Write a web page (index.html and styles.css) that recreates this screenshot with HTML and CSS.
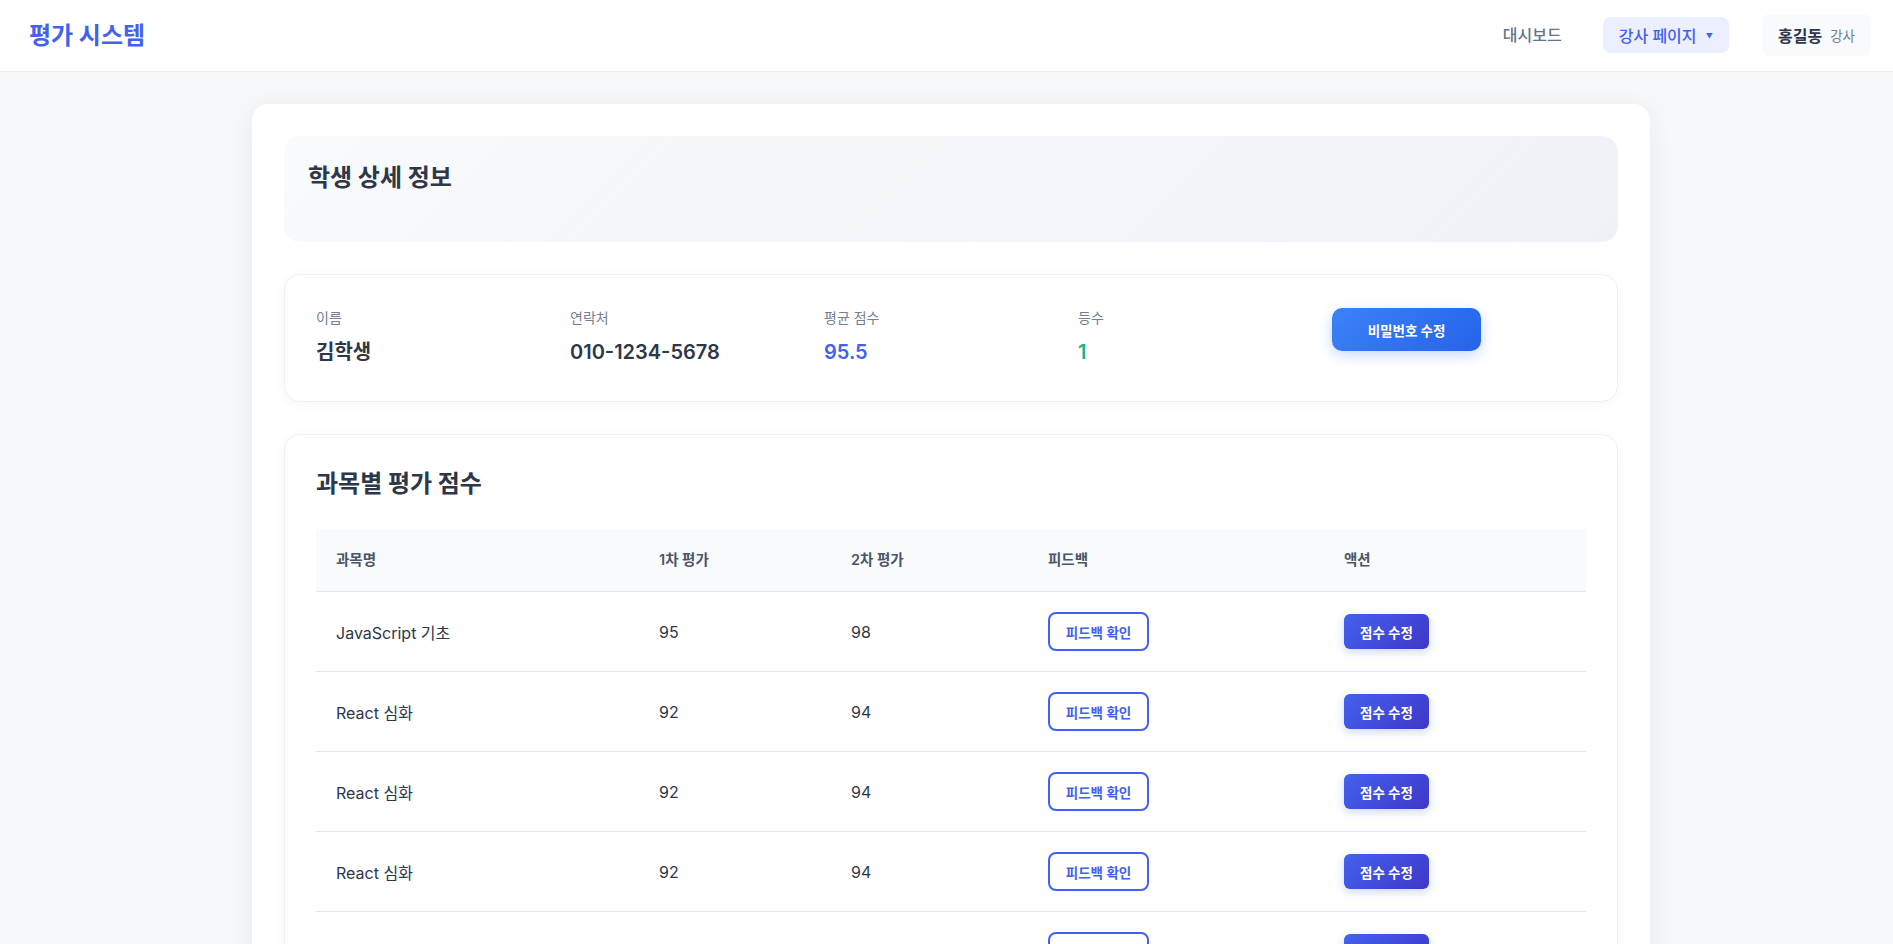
FILE: index.html
```html
<!DOCTYPE html>
<html lang="ko">
<head>
<meta charset="utf-8">
<title>평가 시스템</title>
<link rel="stylesheet" href="styles.css">
</head>
<body>
<header class="topbar">
  <div class="logo">평가 시스템</div>
  <nav class="nav">
    <a class="nav-link">대시보드</a>
    <button class="nav-drop">강사 페이지 <span class="caret">▼</span></button>
    <div class="user-box"><span class="user-name">홍길동</span><span class="user-role">강사</span></div>
  </nav>
</header>

<main class="page">
  <section class="main-card">
    <div class="title-box">
      <h2 class="page-title">학생 상세 정보</h2>
    </div>

    <div class="info-card">
      <div class="info-item">
        <div class="info-label">이름</div>
        <div class="info-value">김학생</div>
      </div>
      <div class="info-item">
        <div class="info-label">연락처</div>
        <div class="info-value">010-1234-5678</div>
      </div>
      <div class="info-item">
        <div class="info-label">평균 점수</div>
        <div class="info-value blue">95.5</div>
      </div>
      <div class="info-item">
        <div class="info-label">등수</div>
        <div class="info-value green">1</div>
      </div>
      <div class="info-item">
        <button class="btn-password">비밀번호 수정</button>
      </div>
    </div>

    <div class="table-card">
      <h3 class="section-title">과목별 평가 점수</h3>
      <table class="score-table">
        <colgroup>
          <col class="c1"><col class="c2"><col class="c3"><col class="c4"><col class="c5">
        </colgroup>
        <thead>
          <tr><th>과목명</th><th>1차 평가</th><th>2차 평가</th><th>피드백</th><th>액션</th></tr>
        </thead>
        <tbody>
          <tr><td>JavaScript 기초</td><td>95</td><td>98</td><td><button class="btn-feedback">피드백 확인</button></td><td><button class="btn-edit">점수 수정</button></td></tr>
          <tr><td>React 심화</td><td>92</td><td>94</td><td><button class="btn-feedback">피드백 확인</button></td><td><button class="btn-edit">점수 수정</button></td></tr>
          <tr><td>React 심화</td><td>92</td><td>94</td><td><button class="btn-feedback">피드백 확인</button></td><td><button class="btn-edit">점수 수정</button></td></tr>
          <tr><td>React 심화</td><td>92</td><td>94</td><td><button class="btn-feedback">피드백 확인</button></td><td><button class="btn-edit">점수 수정</button></td></tr>
          <tr><td>React 심화</td><td>92</td><td>94</td><td><button class="btn-feedback">피드백 확인</button></td><td><button class="btn-edit">점수 수정</button></td></tr>
        </tbody>
      </table>
    </div>
  </section>
</main>
</body>
</html>
```

FILE: styles.css
```css
* { box-sizing: border-box; }

body {
  margin: 0;
  background: #f7f8fa;
  font-family: Inter, "Noto Sans CJK KR", sans-serif;
  color: #2d3748;
}

button { font-family: inherit; cursor: pointer; }

.topbar {
  height: 72px;
  background: #ffffff;
  border-bottom: 1px solid #e9ecf1;
  display: flex;
  align-items: center;
  justify-content: space-between;
  padding: 0 22px 0 29px;
}

.logo {
  font-size: 24px;
  font-weight: 700;
  color: #4361ee;
  margin-top: -4px;
}

.nav {
  display: flex;
  align-items: center;
}

.nav-link {
  font-size: 16px;
  font-weight: 500;
  color: #64748b;
  padding: 8px 16px;
  margin-right: 25px;
  margin-top: -3px;
}

.nav-drop {
  height: 36px;
  padding: 0 16px;
  border: none;
  border-radius: 8px;
  background: #ebefff;
  color: #4361ee;
  font-size: 16px;
  font-weight: 500;
  margin-top: -2px;
}

.caret {
  font-size: 7px;
  margin-left: 5px;
  vertical-align: 3px;
}

.user-box {
  margin-left: 33px;
  height: 42px;
  padding: 0 16px;
  border-radius: 8px;
  background: #f8fafc;
  display: flex;
  align-items: center;
  gap: 8px;
  margin-top: -2px;
}

.user-name {
  font-size: 16px;
  font-weight: 700;
  color: #2d3748;
}

.user-role {
  font-size: 13.5px;
  color: #718096;
}

.page {
  padding: 32px 0 40px 9px;
}

.main-card {
  width: 1398px;
  margin: 0 auto;
  background: #ffffff;
  border-radius: 16px;
  box-shadow: 0 4px 24px rgba(30, 41, 59, 0.07);
  padding: 32px;
}

.title-box {
  background: linear-gradient(135deg, #f8fafc 0%, #eef2f7 100%);
  border-radius: 16px;
  height: 106px;
  padding: 25px 24px;
}

.page-title {
  margin: 0;
  font-size: 24px;
  line-height: 34px;
  font-weight: 700;
  color: #2d3748;
}

.info-card {
  margin-top: 32px;
  background: #ffffff;
  border: 1px solid #edf0f5;
  border-radius: 16px;
  box-shadow: 0 2px 12px rgba(30, 41, 59, 0.04);
  padding: 33px 31px 34px;
  display: grid;
  grid-template-columns: repeat(5, 1fr);
}

.info-label {
  font-size: 14px;
  line-height: 20px;
  color: #718096;
  margin-bottom: 9px;
}

.info-value {
  font-size: 20px;
  line-height: 30px;
  font-weight: 600;
  color: #2d3748;
}

.info-value.blue { color: #4361ee; }
.info-value.green { color: #10b981; }

.btn-password {
  width: 149px;
  height: 43px;
  margin-top: 0;
  border: none;
  border-radius: 10px;
  background: linear-gradient(135deg, #3b82f6 0%, #2563eb 100%);
  color: #ffffff;
  font-size: 13.5px;
  font-weight: 700;
  box-shadow: 0 4px 14px rgba(59, 130, 246, 0.3);
}

.table-card {
  margin-top: 32px;
  background: #ffffff;
  border: 1px solid #edf0f5;
  border-radius: 16px;
  box-shadow: 0 2px 12px rgba(30, 41, 59, 0.04);
  padding: 32px 31px;
}

.section-title {
  margin: 0 0 28px;
  font-size: 24px;
  line-height: 34px;
  font-weight: 700;
  color: #2d3748;
}

.score-table {
  width: 100%;
  border-collapse: collapse;
  table-layout: fixed;
}

.c1 { width: 323px; }
.c2 { width: 192px; }
.c3 { width: 197px; }
.c4 { width: 296px; }
.c5 { width: auto; }

.score-table th {
  background: #f8fafc;
  text-align: left;
  font-size: 14.5px;
  font-weight: 600;
  color: #4a5568;
  padding: 20px 20px;
  line-height: 22px;
  border-bottom: 1px solid #e2e8f0;
}

.score-table td {
  padding: 20px 20px;
  height: 80px;
  font-size: 16px;
  color: #2d3748;
  border-bottom: 1px solid #e2e8f0;
  vertical-align: middle;
}

.btn-feedback {
  width: 101px;
  height: 39px;
  background: #ffffff;
  border: 2px solid #4361ee;
  border-radius: 8px;
  color: #4361ee;
  font-size: 13.5px;
  font-weight: 600;
  padding: 0;
}

.btn-edit {
  width: 85px;
  height: 35px;
  border: none;
  border-radius: 6px;
  background: linear-gradient(135deg, #4361ee 0%, #3f37c9 100%);
  color: #ffffff;
  font-size: 13.5px;
  font-weight: 700;
  box-shadow: 0 3px 10px rgba(67, 97, 238, 0.25);
  padding: 0;
}
```
